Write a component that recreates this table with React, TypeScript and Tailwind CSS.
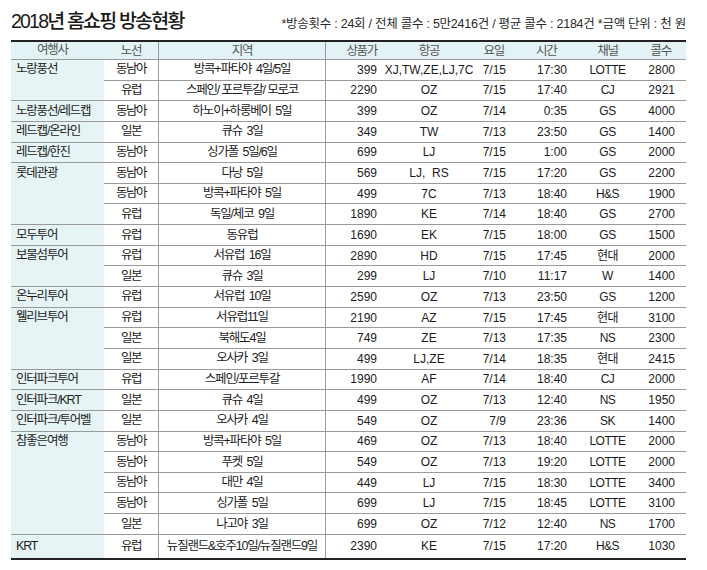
type Row = {
  route: string;
  area: string;
  price: string;
  air: string;
  date: string;
  time: string;
  channel: string;
  calls: string;
};

type Group = {
  agency: string;
  rows: Row[];
};

const r = (
  route: string,
  area: string,
  price: string,
  air: string,
  date: string,
  time: string,
  channel: string,
  calls: string,
): Row => ({ route, area, price, air, date, time, channel, calls });

const groups: Group[] = [
  {
    agency: "노랑풍선",
    rows: [
      r("동남아", "방콕+파타야  4일/5일", "399", "XJ,TW,ZE,LJ,7C", "7/15", "17:30", "LOTTE", "2800"),
      r("유럽", "스페인/ 포르투갈/ 모로코", "2290", "OZ", "7/15", "17:40", "CJ", "2921"),
    ],
  },
  {
    agency: "노랑풍선/레드캡",
    rows: [r("동남아", "하노이+하롱베이  5일", "399", "OZ", "7/14", "0:35", "GS", "4000")],
  },
  {
    agency: "레드캡/온라인",
    rows: [r("일본", "큐슈  3일", "349", "TW", "7/13", "23:50", "GS", "1400")],
  },
  {
    agency: "레드캡/한진",
    rows: [r("동남아", "싱가폴  5일/6일", "699", "LJ", "7/15", "1:00", "GS", "2000")],
  },
  {
    agency: "롯데관광",
    rows: [
      r("동남아", "다낭  5일", "569", "LJ,  RS", "7/15", "17:20", "GS", "2200"),
      r("동남아", "방콕+파타야  5일", "499", "7C", "7/13", "18:40", "H&S", "1900"),
      r("유럽", "독일/체코  9일", "1890", "KE", "7/14", "18:40", "GS", "2700"),
    ],
  },
  {
    agency: "모두투어",
    rows: [r("유럽", "동유럽", "1690", "EK", "7/15", "18:00", "GS", "1500")],
  },
  {
    agency: "보물섬투어",
    rows: [
      r("유럽", "서유럽  16일", "2890", "HD", "7/15", "17:45", "현대", "2000"),
      r("일본", "큐슈  3일", "299", "LJ", "7/10", "11:17", "W", "1400"),
    ],
  },
  {
    agency: "온누리투어",
    rows: [r("유럽", "서유럽  10일", "2590", "OZ", "7/13", "23:50", "GS", "1200")],
  },
  {
    agency: "웰리브투어",
    rows: [
      r("유럽", "서유럽11일", "2190", "AZ", "7/15", "17:45", "현대", "3100"),
      r("일본", "북해도4일", "749", "ZE", "7/13", "17:35", "NS", "2300"),
      r("일본", "오사카  3일", "499", "LJ,ZE", "7/14", "18:35", "현대", "2415"),
    ],
  },
  {
    agency: "인터파크투어",
    rows: [r("유럽", "스페인/포르투갈", "1990", "AF", "7/14", "18:40", "CJ", "2000")],
  },
  {
    agency: "인터파크/KRT",
    rows: [r("일본", "큐슈  4일", "499", "OZ", "7/13", "12:40", "NS", "1950")],
  },
  {
    agency: "인터파크/투어벨",
    rows: [r("일본", "오사카  4일", "549", "OZ", "7/9", "23:36", "SK", "1400")],
  },
  {
    agency: "참좋은여행",
    rows: [
      r("동남아", "방콕+파타야  5일", "469", "OZ", "7/13", "18:40", "LOTTE", "2000"),
      r("동남아", "푸켓  5일", "549", "OZ", "7/13", "19:20", "LOTTE", "2000"),
      r("동남아", "대만  4일", "449", "LJ", "7/15", "18:30", "LOTTE", "3400"),
      r("동남아", "싱가폴  5일", "699", "LJ", "7/15", "18:45", "LOTTE", "3100"),
      r("일본", "나고야  3일", "699", "OZ", "7/12", "12:40", "NS", "1700"),
    ],
  },
  {
    agency: "KRT",
    rows: [r("유럽", "뉴질랜드&호주10일/뉴질랜드9일", "2390", "KE", "7/15", "17:20", "H&S", "1030")],
  },
];

const cols = "grid grid-cols-[54px_168px_54px_98px_32px_60px_75px_41px]";

function DataRow({ row, last }: { row: Row; last: boolean }) {
  return (
    <div
      className={`${cols} items-center whitespace-pre ${
        last ? "h-[23px]" : "h-[20.65px] border-b border-[#9a9a9a]"
      }`}
    >
      <span className="text-center text-[12.5px] tracking-[-1.5px]">{row.route}</span>
      <span className="h-full flex items-center justify-center border-x border-[#9a9a9a] text-[12.5px] tracking-[-1.2px]">
        {row.area}
      </span>
      <span className="text-right pr-[3px]">{row.price}</span>
      <span className="text-center">{row.air}</span>
      <span className="text-right pr-[4px]">{row.date}</span>
      <span className="text-right pr-[3px]">{row.time}</span>
      <span className="text-center tracking-[-0.5px]">{row.channel}</span>
      <span className="text-right pr-[11px]">{row.calls}</span>
    </div>
  );
}

export default function App() {
  return (
    <div className="w-[707px] h-[570px] bg-white text-[#1c1c1c] font-['Liberation_Sans','Noto_Sans_CJK_KR',sans-serif]">
      {/* title */}
      <div className="h-[40px] pl-[11px] pr-[21px] pt-[9px] flex items-baseline justify-between">
        <h1 className="text-[19.5px] font-medium tracking-[-1.8px] leading-[24px] text-[#1a1a1a]">
          2018년 홈쇼핑 방송현황
        </h1>
        <p className="text-[12.5px] tracking-[-0.25px] text-[#2a2a2a]">
          *방송횟수 : 24회 / 전체 콜수 : 5만2416건 / 평균 콜수 : 2184건 *금액 단위 : 천 원
        </p>
      </div>

      {/* table */}
      <div className="ml-[11px] w-[675px] border-t-2 border-b-2 border-[#222] text-[12px]">
        <div className="flex h-[18px] bg-[#e2f2f5] border-b border-[#9a9a9a] text-[#555] text-[12.5px] tracking-[-1.3px] items-center">
          <span className="w-[93px] pl-[26px]">여행사</span>
          <div className={`${cols} flex-1 h-full items-center`}>
            <span className="text-center">노선</span>
            <span className="h-full flex items-center justify-center border-x border-[#9a9a9a]">지역</span>
            <span className="text-right pr-[3px]">상품가</span>
            <span className="text-center">항공</span>
            <span className="text-right pr-[6px]">요일</span>
            <span className="pl-[26px]">시간</span>
            <span className="text-center">채널</span>
            <span className="text-right pr-[15px]">콜수</span>
          </div>
        </div>

        {groups.map((g, gi) => {
          const lastGroup = gi === groups.length - 1;
          return (
            <div key={g.agency} className="flex">
              <div
                className={`w-[93px] shrink-0 bg-[#e6f4f6] pl-[5px] text-[12.5px] tracking-[-1.2px] ${
                  lastGroup ? "" : "border-b border-[#9a9a9a]"
                }`}
              >
                <div className={`${lastGroup ? "h-[23px]" : "h-[19.65px]"} flex items-center`}>
                  {g.agency}
                </div>
              </div>
              <div className="flex-1 flex flex-col">
                {g.rows.map((row, i) => (
                  <DataRow key={i} row={row} last={lastGroup && i === g.rows.length - 1} />
                ))}
              </div>
            </div>
          );
        })}
      </div>
    </div>
  );
}
